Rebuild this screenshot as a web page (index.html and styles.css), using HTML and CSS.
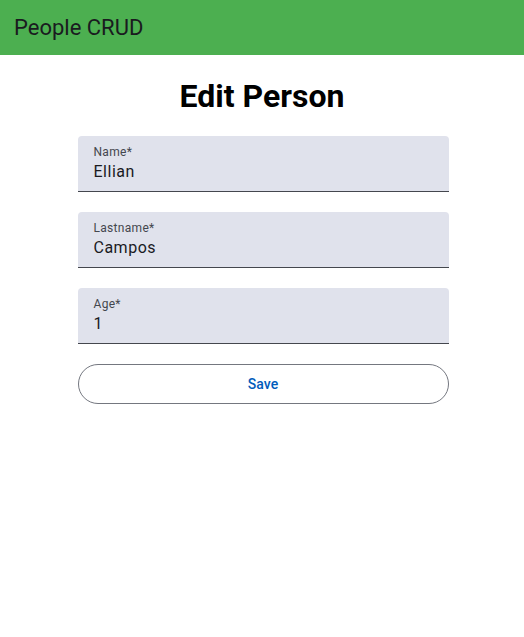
FILE: index.html
```html
<!DOCTYPE html>
<html>
<head>
<meta charset="utf-8">
<link rel="stylesheet" href="styles.css">
</head>
<body>
<header class="toolbar"><span class="toolbar-title">People CRUD</span></header>
<main class="page">
  <h1 class="heading">Edit Person</h1>
  <form class="form">
    <label class="field">
      <span class="field-label">Name*</span>
      <input class="field-input" value="Ellian">
    </label>
    <label class="field">
      <span class="field-label">Lastname*</span>
      <input class="field-input" value="Campos">
    </label>
    <label class="field">
      <span class="field-label">Age*</span>
      <input class="field-input" value="1">
    </label>
    <button type="button" class="save">Save</button>
  </form>
</main>
</body>
</html>
```
FILE: styles.css
```css
* { box-sizing: border-box; }
body {
  margin: 0;
  font-family: Roboto, "Noto Sans", sans-serif;
  background: #fff;
  color: #1a1b1f;
}
.toolbar {
  height: 55px;
  background: #4caf50;
  display: flex;
  align-items: center;
  padding: 0 14px;
}
.toolbar-title {
  font-size: 22px;
  font-weight: 400;
  color: #1a1b1f;
}
.page {
  display: flex;
  flex-direction: column;
  align-items: center;
}
.heading {
  font-size: 32px;
  font-weight: 700;
  margin: 22px 0 21px;
  color: #000;
}
.form {
  width: 371px;
  margin-left: 2px;
  display: flex;
  flex-direction: column;
  gap: 20px;
}
.field {
  height: 56px;
  background: #e0e2ec;
  border-radius: 4px 4px 0 0;
  border-bottom: 1px solid #44474e;
  padding: 8px 16px 0;
  display: flex;
  flex-direction: column;
}
.field-label {
  font-size: 12px;
  line-height: 16px;
  color: #44474e;
  letter-spacing: 0.3px;
}
.field-input {
  border: 0;
  background: transparent;
  padding: 0;
  margin: 0;
  font-family: inherit;
  font-size: 16px;
  line-height: 24px;
  height: 24px;
  color: #1a1b1f;
  letter-spacing: 0.5px;
  outline: none;
}
.save {
  height: 40px;
  border: 1px solid #74777f;
  border-radius: 20px;
  background: #fff;
  color: #005cbb;
  font-family: inherit;
  font-size: 14px;
  font-weight: 500;
  letter-spacing: 0.1px;
}
```
